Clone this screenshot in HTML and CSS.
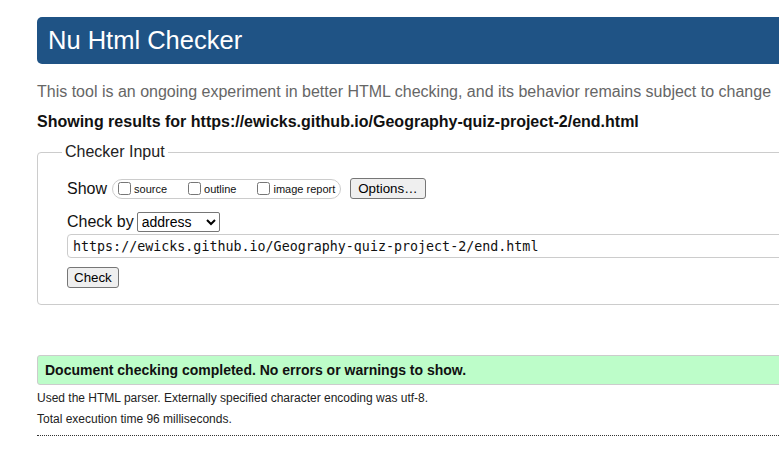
FILE: index.html
```html
<!DOCTYPE html>
<html lang="en">
<head>
<meta charset="utf-8">
<title>Nu Html Checker</title>
<link rel="stylesheet" href="styles.css">
</head>
<body>
<div class="page">
  <h1 class="banner">Nu Html Checker</h1>
  <p class="tagline">This tool is an ongoing experiment in better HTML checking, and its behavior remains subject to change</p>
  <p class="showing">Showing results for https://ewicks.github.io/Geography-quiz-project-2/end.html</p>
  <fieldset class="checker">
    <legend class="legend">Checker Input</legend>
    <div class="row show-row">
      <span class="row-label">Show</span>
      <span class="pill">
        <label class="opt"><input type="checkbox" class="cb"><span>source</span></label>
        <label class="opt"><input type="checkbox" class="cb"><span>outline</span></label>
        <label class="opt last"><input type="checkbox" class="cb"><span>image report</span></label>
      </span>
      <button class="btn options">Options…</button>
    </div>
    <div class="row by-row">
      <span class="row-label">Check by</span>
      <select class="sel"><option>address</option></select>
    </div>
    <input class="url" type="text" value="https://ewicks.github.io/Geography-quiz-project-2/end.html">
    <div class="row check-row">
      <button class="btn check">Check</button>
    </div>
  </fieldset>
  <p class="success">Document checking completed. No errors or warnings to show.</p>
  <p class="details">Used the HTML parser. Externally specified character encoding was utf-8.</p>
  <p class="details">Total execution time 96 milliseconds.</p>
  <hr class="rule">
</div>
</body>
</html>
```
FILE: styles.css
```css
html, body {
  margin: 0;
  padding: 0;
  overflow: hidden;
  background: #fff;
}
body {
  font-family: "Liberation Sans", Arial, sans-serif;
  color: #111;
}
.page {
  width: 1000px;
  padding: 17px 0 0 37px;
}
.banner {
  margin: 0;
  height: 47px;
  display: flex;
  align-items: center;
  padding: 0 0 0 11px;
  background: #1f5385;
  color: #fff;
  font-size: 25.5px;
  font-weight: normal;
  border-radius: 5px;
}
.tagline {
  margin: 18px 0 0;
  font-size: 16px;
  line-height: 20px;
  color: #666;
}
.showing {
  margin: 10px 0 0;
  font-size: 16px;
  line-height: 20px;
  font-weight: bold;
  color: #111;
}
.checker {
  margin: 11px 0 0;
  padding: 17px 0 16px 29px;
  border: 1px solid #ccc;
  border-radius: 4px;
}
.legend {
  margin-left: -5px;
  padding: 0 3px;
  font-size: 16px;
  color: #222;
}
.row {
  display: flex;
  align-items: center;
}
.row-label {
  font-size: 16px;
  margin-right: 5px;
}
.pill {
  display: inline-flex;
  align-items: center;
  height: 18px;
  border: 1px solid #ccc;
  border-radius: 10px;
  padding: 0 5px 0 4px;
  font-size: 11px;
}
.opt {
  display: inline-flex;
  align-items: center;
  margin-right: 20px;
}
.opt.last {
  margin-right: 0;
}
.cb {
  margin: 0 3px 0 1px;
  width: 13px;
  height: 13px;
}
.btn {
  font-family: "Liberation Sans", Arial, sans-serif;
  font-size: 13.33px;
  background: #efefef;
  border: 1px solid #767676;
  border-radius: 3px;
  padding: 1px 6px;
  height: 21px;
  color: #000;
}
.options {
  margin-left: 9px;
  padding: 1px 7px;
}
.by-row {
  margin-top: 13px;
}
.sel {
  font-family: "Liberation Sans", Arial, sans-serif;
  font-size: 14px;
  width: 83px;
  height: 20px;
  margin-left: -2px;
  border: 1px solid #767676;
  border-radius: 2px;
  background: #fff;
}
.url {
  display: block;
  box-sizing: border-box;
  margin-top: 2px;
  width: 900px;
  height: 24px;
  padding: 0 5px;
  font-family: "DejaVu Sans Mono", Menlo, monospace;
  font-size: 13.33px;
  color: #111;
  border: 1px solid #ccc;
  border-radius: 4px;
}
.check-row {
  margin-top: 9px;
}
.success {
  margin: 50px 0 0;
  height: 28px;
  display: flex;
  align-items: center;
  padding-left: 7px;
  background: #bdfdc9;
  border: 1px solid #ccc;
  border-radius: 3px;
  font-size: 14px;
  font-weight: bold;
  color: #111;
}
.details {
  margin: 0;
  font-size: 12px;
  line-height: 21px;
  color: #222;
}
.success + .details {
  margin-top: 3px;
}
.rule {
  margin: 5px 0 0;
  border: 0;
  border-top: 1px dotted #333;
  height: 0;
}
```
